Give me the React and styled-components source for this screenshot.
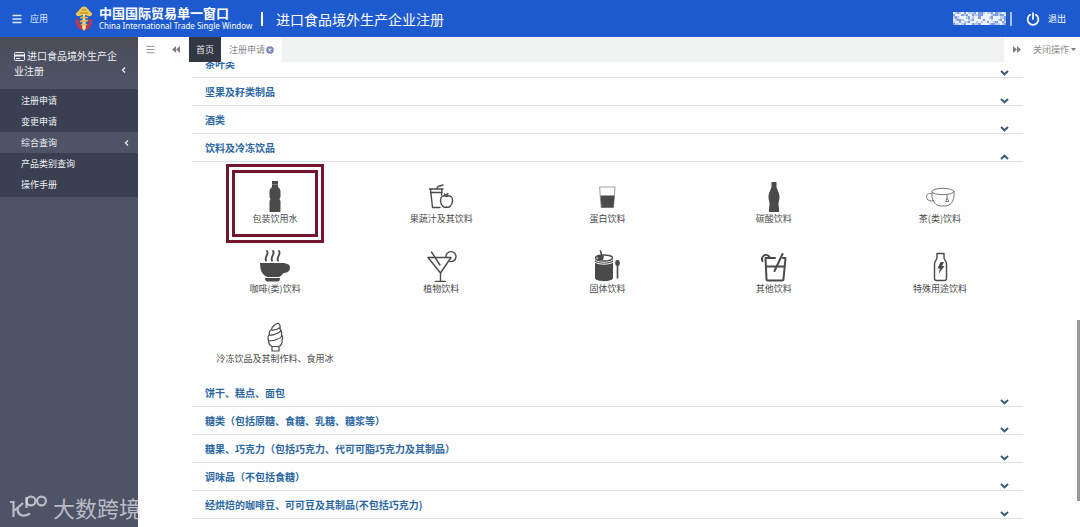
import React from "react";
import styled, { createGlobalStyle, css } from "styled-components";

const GlobalStyle = createGlobalStyle`
  * { box-sizing: border-box; }
  body {
    margin: 0;
    overflow: hidden;
    background: #fefefe;
    font-family: "Noto Sans CJK SC", "Liberation Sans", sans-serif;
    font-size: 9px;
  }
  button { border: 0; padding: 0; background: none; font: inherit; color: inherit; cursor: pointer; }
  a { color: inherit; text-decoration: none; }
  ul { list-style: none; margin: 0; padding: 0; }
  h1, h2, p { margin: 0; font: inherit; }
  svg { display: block; flex: none; }
`;

const Page = styled.div`
  display: flex;
  flex-direction: column;
  height: 100vh;
`;

/* ---------- top bar ---------- */

const TopBar = styled.header`
  display: flex;
  align-items: center;
  flex: none;
  height: 37px;
  padding: 0 14px 0 12px;
  background: #1d5ad0;
  color: #fff;
`;

const AppsButton = styled.button`
  display: flex;
  align-items: center;
  gap: 8px;
  width: 62px;
  color: #dfe9fb;
`;

const Brand = styled.a`
  display: flex;
  align-items: center;
  gap: 5px;
`;

const BrandNames = styled.span`
  display: flex;
  flex-direction: column;
  width: 150px;
  white-space: nowrap;
`;

const BrandName = styled.span`
  font-size: 13px;
  line-height: 14px;
  font-weight: 700;
`;

const BrandEnglish = styled.span`
  font-family: "Noto Sans", sans-serif;
  font-size: 8px;
  line-height: 12px;
`;

const Divider = styled.span`
  width: 2px;
  height: 14px;
  background: ${(p) => (p.$soft ? "#a9c3f2" : "#fff")};
`;

const SystemTitle = styled.h1`
  font-size: 14px;
  line-height: 20px;
`;

const TitleGroup = styled.div`
  display: flex;
  align-items: center;
  gap: 13px;
  margin-left: 12px;
`;

const UserArea = styled.div`
  display: flex;
  align-items: center;
  margin-left: auto;
  gap: 4px;
`;

const LogoutButton = styled.button`
  display: flex;
  align-items: center;
  gap: 8px;
  margin-left: 10px;
`;

/* ---------- frame ---------- */

const Body = styled.div`
  display: flex;
  flex: 1;
  min-height: 0;
`;

const Sidebar = styled.nav`
  flex: none;
  width: 138px;
  background: #4f5366;
  color: #eef0f4;
`;

const SidebarTitle = styled.button`
  display: flex;
  align-items: flex-end;
  width: 100%;
  height: 52px;
  padding: 0 12px 11px 14px;
  font-size: 10px;
  line-height: 15px;
  text-align: left;
  background: linear-gradient(#4a4c57, #505469);
  > svg { margin-bottom: 4px; }
`;

const SidebarTitleText = styled.span`
  flex: 1;
  svg { display: inline-block; vertical-align: -1px; margin-right: 2px; }
`;

const SubMenu = styled.ul`
  padding: 1px 0 2px;
  background: #3a4051;
`;

const SubMenuLink = styled.a`
  display: flex;
  align-items: center;
  justify-content: space-between;
  height: 21px;
  padding: 0 9px 0 21px;
  background: ${(p) => (p.$active ? "#4f5366" : "transparent")};
`;

const Main = styled.main`
  position: relative;
  display: flex;
  flex-direction: column;
  flex: 1;
  min-width: 0;
`;

/* ---------- tab strip ---------- */

const TabStrip = styled.div`
  display: flex;
  flex: none;
  height: 25px;
  background: #f1f2f2;
  color: #8b8b8b;
`;

const StripButton = styled.button`
  display: flex;
  align-items: center;
  justify-content: center;
  gap: 2px;
  width: ${(p) => p.$width}px;
  background: #fefefe;
`;

const Tab = styled.button`
  display: flex;
  align-items: center;
  justify-content: center;
  gap: 1px;
  padding: 0 ${(p) => (p.$home ? 7 : 8)}px;
  background: #fefefe;
  ${(p) => p.$home && css`
    background: #333643;
    color: #e8e8ec;
  `}
`;

const StripEnd = styled.div`
  display: flex;
  margin-left: auto;
`;

/* ---------- category list ---------- */

const Scroller = styled.div`
  flex: 1;
  min-height: 0;
  overflow: hidden;
`;

const CategoryList = styled.div`
  margin: -12px 57px 0 54px;
`;

const CategoryHeader = styled.button`
  display: flex;
  align-items: center;
  justify-content: space-between;
  width: 100%;
  height: 28px;
  padding: 0 14px 0 13px;
  border-bottom: 1px solid #dcdfe3;
  color: #2c68a3;
  font-size: 10px;
  font-weight: 700;
  text-align: left;
  svg { align-self: flex-end; margin-bottom: 1px; }
`;

const ProductGrid = styled.div`
  display: grid;
  grid-template-columns: repeat(5, 1fr);
  row-gap: 22px;
  padding: 16px 0 13px;
`;

const Product = styled.button`
  position: relative;
  display: flex;
  flex-direction: column;
  align-items: center;
  color: #4a4a4a;
  line-height: 14px;
  white-space: nowrap;
`;

const ProductIcon = styled.svg`
  width: 40px;
  height: 34px;
  fill: none;
  stroke: #4a4a4a;
  stroke-width: 1.4;
  stroke-linecap: round;
  stroke-linejoin: round;
`;

const Highlight = styled.span`
  position: absolute;
  top: -14px;
  bottom: -17px;
  left: 50%;
  width: 98px;
  margin-left: -49px;
  border: 9px double #741530;
`;

const ScrollThumb = styled.span`
  position: absolute;
  right: 0;
  top: 283px;
  width: 3px;
  height: 181px;
  background: #999;
`;

const Watermark = styled.div`
  position: absolute;
  left: 10px;
  bottom: 7px;
  display: flex;
  align-items: center;
  gap: 5px;
  color: rgba(222, 223, 230, 0.75);
  font-size: 22px;
  line-height: 26px;
  pointer-events: none;
`;

/* ---------- drawings ---------- */

const MenuIcon = ({ size, width }) => (
  <svg width={size} height={size} viewBox="0 0 10 10" stroke="currentColor" strokeWidth={width}>
    <path d="M0.500 1.500H9.500M0.500 5H9.500M0.500 8.500H9.500" />
  </svg>
);

const Emblem = () => (
  <svg width="20" height="26" viewBox="0 0 20 26">
    <path d="M2 13C1 19 4 23 9 24L11 24C16 23 19 19 18 13L15 13C16 17 14 20 10 21C6 20 4 17 5 13Z" fill="#c6374b" />
    <path d="M2 7C4 6 6 3 7 2C8 0 12 0 13 2C14 3 16 6 18 7L18 9C16 11 13 10 12 9L8 9C7 10 4 11 2 9Z" fill="#eec751" />
    <path d="M9 7H11L12 22L10 25L8 22Z" fill="#f5da85" />
    <path d="M6 12C9 10 13 13 14 11M6 16C9 13 12 17 14 14M7 19C9 17 12 20 13 18" stroke="#e8b84a" strokeWidth="1.5" fill="none" />
    <path d="M8 4H12M6 7L14 7" stroke="#bd7c2d" strokeWidth="1" />
  </svg>
);

const MOSAIC = [
  "3212313222131123221312232",
  "1333121331221133332112113",
  "2123332132331333321333221",
  "3211233221333313332332131",
  "2331322133323233133213312",
  "1223213331221333321122321",
];
const MOSAIC_COLORS = { 1: "#7f9fe3", 2: "#b9cbf2", 3: "#eef3fd" };

const MaskedUser = () => (
  <svg width="53" height="13" viewBox="0 0 25 6" preserveAspectRatio="none" shapeRendering="crispEdges">
    {MOSAIC.map((row, y) =>
      [...row].map((c, x) => (
        <rect key={`${x}-${y}`} x={x} y={y} width="1" height="1" fill={MOSAIC_COLORS[c]} />
      ))
    )}
  </svg>
);

const PowerIcon = () => (
  <svg width="14" height="14" viewBox="0 0 14 14" fill="none" stroke="#fff" strokeWidth="1.7" strokeLinecap="round">
    <path d="M7 1V7M4.2 2.8A5.4 5.4 0 1 0 9.8 2.8" />
  </svg>
);

const CardIcon = () => (
  <svg width="11" height="9" viewBox="0 0 11 9" fill="none" stroke="#eef0f4">
    <rect x="0.5" y="0.5" width="10" height="8" rx="1" />
    <path d="M1 3.500H10" strokeWidth="2" />
    <path d="M2 6.5H6" />
  </svg>
);

const AngleLeft = () => (
  <svg width="5" height="8" viewBox="0 0 5 8" fill="none" stroke="currentColor" strokeWidth="1.2">
    <path d="M4 1.5L1.5 4L4 6.5" />
  </svg>
);

const DoubleArrow = ({ right }) => (
  <svg width="8" height="7" viewBox="0 0 8 7" fill="#808080">
    <path d={right ? "M0 0L4 3.5V0L8 3.5L4 7V3.5L0 7Z" : "M8 0L4 3.5V0L0 3.5L4 7V3.5L8 7Z"} />
  </svg>
);

const CloseIcon = () => (
  <svg width="8" height="8" viewBox="0 0 8 8">
    <circle cx="4" cy="4" r="3.8" fill="#7886b4" />
    <path d="M2.6 2.6L5.4 5.4M5.4 2.6L2.6 5.4" stroke="#fff" strokeWidth="1.1" />
  </svg>
);

const Caret = () => (
  <svg width="5" height="3" viewBox="0 0 5 3" fill="#777"><path d="M0 0H5L2.5 3Z" /></svg>
);

const Chevron = ({ up }) => (
  <svg width="9" height="6" viewBox="0 0 9 6" fill="none" stroke="#3d5c7a" strokeWidth="2">
    <path d={up ? "M1 5L4.5 1.7L8 5" : "M1 1L4.5 4.3L8 1"} />
  </svg>
);

const WatermarkLogo = () => (
  <svg width="38" height="26" viewBox="0 0 38 26" fill="none" stroke="currentColor" strokeWidth="2.2">
    <path d="M0 8H3.500V23M13 9L4.500 16.500M8 13.500C6.500 20 12 24.500 20 19.500" />
    <path d="M16.500 14V3" />
    <circle cx="21" cy="7" r="4.4" />
    <circle cx="31.5" cy="7" r="4.4" />
  </svg>
);

const solid = { fill: "#4a4a4a", stroke: "none" };

const DRAWINGS = {
  bottle: (
    <g {...solid}>
      <rect x="17" y="3" width="6" height="3.4" />
      <path d="M17 6.500H23V9C25 10.500 25.500 12 25.500 14V19L24.500 21L25.500 23V33C25.500 34 25 34 24 34H16C15 34 14.500 34 14.500 33V23L15.500 21L14.500 19V14C14.500 12 15 10.500 17 9Z" />
    </g>
  ),
  juice: (
    <g>
      <path d="M8.500 11H22M9.500 11.500L11.500 29.500H19M21 11.500L20.500 17M9.500 14.500H21M15.500 11L17 8.500L22 7" />
      <path d="M25.500 18.500C22.500 16.500 19 19 19.500 23C20 27 22.500 30.500 25.500 29C28.500 30.500 31 27 31.500 23C32 19 28.500 16.500 25.500 18.500ZM25.500 18C25.500 17 26 16 27 15.500M25 17.500L23.500 16" />
    </g>
  ),
  glass: (
    <g>
      <path d="M13 9H28L26.500 29.500H14.500Z" strokeWidth="0.8" stroke="#888" />
      <path d="M13.500 17.500H27.500L26.500 29.500H14.500Z" {...solid} />
    </g>
  ),
  cola: (
    <path {...solid} d="M17.500 4H22.500V8.500C23 12 25.500 14.500 25.500 19C25.500 22 24.500 23 24.500 26C24.500 29 25.500 31 25 34H15C14.500 31 15.500 29 15.500 26C15.500 23 14.500 22 14.500 19C14.500 14.500 17 12 17.500 8.500Z" />
  ),
  tea: (
    <g strokeWidth="1" stroke="#777">
      <ellipse cx="23" cy="13.500" rx="11" ry="3.200" />
      <path d="M12 14C11 22 15 28 21 28H25C31 28 35 22 34 14M12 16C8 14 5.500 17 7 20.500C8 23 11 23.500 13.500 22.500M27 16.500V20.500M27 20.500L25.500 23.500H28.500Z" />
    </g>
  ),
  coffee: (
    <g>
      <path d="M12 3C14.500 6 9 9 11 12.500M18 3C20.500 6 15 9 17 12.500M24 3C26.500 6 21 9 23 12.500" strokeWidth="1.900" />
      <path {...solid} d="M5 15H29C31 16 35 15.500 35 19.500C35 24 31 25 28.500 25C27 27 26 28 24 29H13C8 28 5 23 5 15ZM10 30H25C25 32.500 24 33.500 23 33.500H12C11 33.500 10 32.500 10 30Z" />
    </g>
  ),
  cocktail: (
    <g>
      <path d="M7 9.500H30L19.500 25ZM19.500 25V33M14.500 33.500H24.500M10.500 4L19 17" />
      <path d="M25 9A5 5 0 1 1 29 13.500" />
    </g>
  ),
  powder: (
    <g>
      <ellipse cx="17" cy="10" rx="8.500" ry="3" />
      <path {...solid} d="M8 12C10 15.500 24 15.500 26 12V30.500C24 34 10 34 8 30.500ZM10 8L17 7.500L16 12L11 12Z" />
      <path d="M8.500 14.500C12 16.800 22 16.800 25.500 14.500" stroke="#fff" strokeWidth="1" />
      <path d="M13.500 3L15.500 10M30.500 17V30" strokeWidth="1.600" />
      <ellipse cx="30.500" cy="15" rx="2.300" ry="3" {...solid} />
    </g>
  ),
  other: (
    <g strokeWidth="2">
      <path d="M12 10H21M11.500 10L12.500 31C12.500 32 13 32.500 14 32.500H28C29 32.500 29.500 32 29.500 31L31.500 10H29M12 18.500H30.500M28.500 6L20.500 23" />
      <path d="M8.500 13A4 4 0 1 1 15.500 9" />
    </g>
  ),
  energy: (
    <g>
      <path d="M17 5.500H24V9.500C24 12 26.500 13 26.500 16V30.500C26.500 32 26 32.500 24.500 32.500H16.500C15 32.500 14.500 32 14.500 30.500V16C14.500 13 17 12 17 9.500Z" />
      <path {...solid} d="M20.500 14H24L22 18H24.500L18.500 26L20 20.500H17.500Z" />
    </g>
  ),
  icecream: (
    <g strokeWidth="1.200">
      <path d="M23 5C21 6 17 8 16.500 11.500C14 13 14 15 14.500 16.500C12.500 18 13 21 13.500 22.500C13.500 26 15 27.500 17 28.500H24C26 27.500 27.500 26 27 22C28 20 27.500 18 26.500 17C27 14 26 12 25 11C25.500 8 25 6 23 5ZM16.500 12C19 12.500 23 11 25 9.500M14.500 17C18 17.500 24 15 26 13M13.500 22.500C18 23.500 25 21 27 18M17 28.500V33H24V28.500" />
    </g>
  ),
};

/* ---------- data ---------- */

const MENU = [
  { label: "注册申请" },
  { label: "变更申请" },
  { label: "综合查询", active: true },
  { label: "产品类别查询" },
  { label: "操作手册" },
];

const DRINKS = [
  { label: "包装饮用水", icon: "bottle", marked: true },
  { label: "果蔬汁及其饮料", icon: "juice" },
  { label: "蛋白饮料", icon: "glass" },
  { label: "碳酸饮料", icon: "cola" },
  { label: "茶(类)饮料", icon: "tea" },
  { label: "咖啡(类)饮料", icon: "coffee" },
  { label: "植物饮料", icon: "cocktail" },
  { label: "固体饮料", icon: "powder" },
  { label: "其他饮料", icon: "other" },
  { label: "特殊用途饮料", icon: "energy" },
  { label: "冷冻饮品及其制作料、食用冰", icon: "icecream" },
];

const CATEGORIES = [
  { title: "茶叶类" },
  { title: "坚果及籽类制品" },
  { title: "酒类" },
  { title: "饮料及冷冻饮品", products: DRINKS },
  { title: "饼干、糕点、面包" },
  { title: "糖类（包括原糖、食糖、乳糖、糖浆等）" },
  { title: "糖果、巧克力（包括巧克力、代可可脂巧克力及其制品）" },
  { title: "调味品（不包括食糖）" },
  { title: "经烘焙的咖啡豆、可可豆及其制品(不包括巧克力)" },
];

const Category = ({ title, products }) => (
  <section>
    <CategoryHeader aria-expanded={Boolean(products)}>
      {title}
      <Chevron up={Boolean(products)} />
    </CategoryHeader>
    {products && (
      <ProductGrid>
        {products.map((p) => (
          <Product key={p.label}>
            <ProductIcon viewBox="0 0 40 34">{DRAWINGS[p.icon]}</ProductIcon>
            {p.label}
            {p.marked && <Highlight />}
          </Product>
        ))}
      </ProductGrid>
    )}
  </section>
);

export default function App() {
  return (
    <Page lang="zh-CN">
      <GlobalStyle />
      <TopBar>
        <AppsButton><MenuIcon size={10} width={1.6} />应用</AppsButton>
        <Brand href="#">
          <Emblem />
          <BrandNames>
            <BrandName>中国国际贸易单一窗口</BrandName>
            <BrandEnglish>China International Trade Single Window</BrandEnglish>
          </BrandNames>
        </Brand>
        <TitleGroup>
          <Divider />
          <SystemTitle>进口食品境外生产企业注册</SystemTitle>
        </TitleGroup>
        <UserArea>
          <MaskedUser />
          <Divider $soft />
          <LogoutButton><PowerIcon />退出</LogoutButton>
        </UserArea>
      </TopBar>
      <Body>
        <Sidebar>
          <SidebarTitle>
            <SidebarTitleText><CardIcon />进口食品境外生产企业注册</SidebarTitleText>
            <AngleLeft />
          </SidebarTitle>
          <SubMenu>
            {MENU.map((m) => (
              <li key={m.label}>
                <SubMenuLink href="#" $active={m.active}>
                  {m.label}
                  {m.active && <AngleLeft />}
                </SubMenuLink>
              </li>
            ))}
          </SubMenu>
        </Sidebar>
        <Main>
          <TabStrip>
            <StripButton $width={25} aria-label="菜单"><MenuIcon size={9} width={1} /></StripButton>
            <StripButton $width={26} aria-label="向左"><DoubleArrow /></StripButton>
            <Tab $home>首页</Tab>
            <Tab>注册申请<CloseIcon /></Tab>
            <StripEnd>
              <StripButton $width={25} aria-label="向右"><DoubleArrow right /></StripButton>
              <StripButton $width={51}>关闭操作<Caret /></StripButton>
            </StripEnd>
          </TabStrip>
          <Scroller>
            <CategoryList>
              {CATEGORIES.map((c) => <Category key={c.title} {...c} />)}
            </CategoryList>
          </Scroller>
          <ScrollThumb />
        </Main>
      </Body>
      <Watermark><WatermarkLogo />大数跨境</Watermark>
    </Page>
  );
}
